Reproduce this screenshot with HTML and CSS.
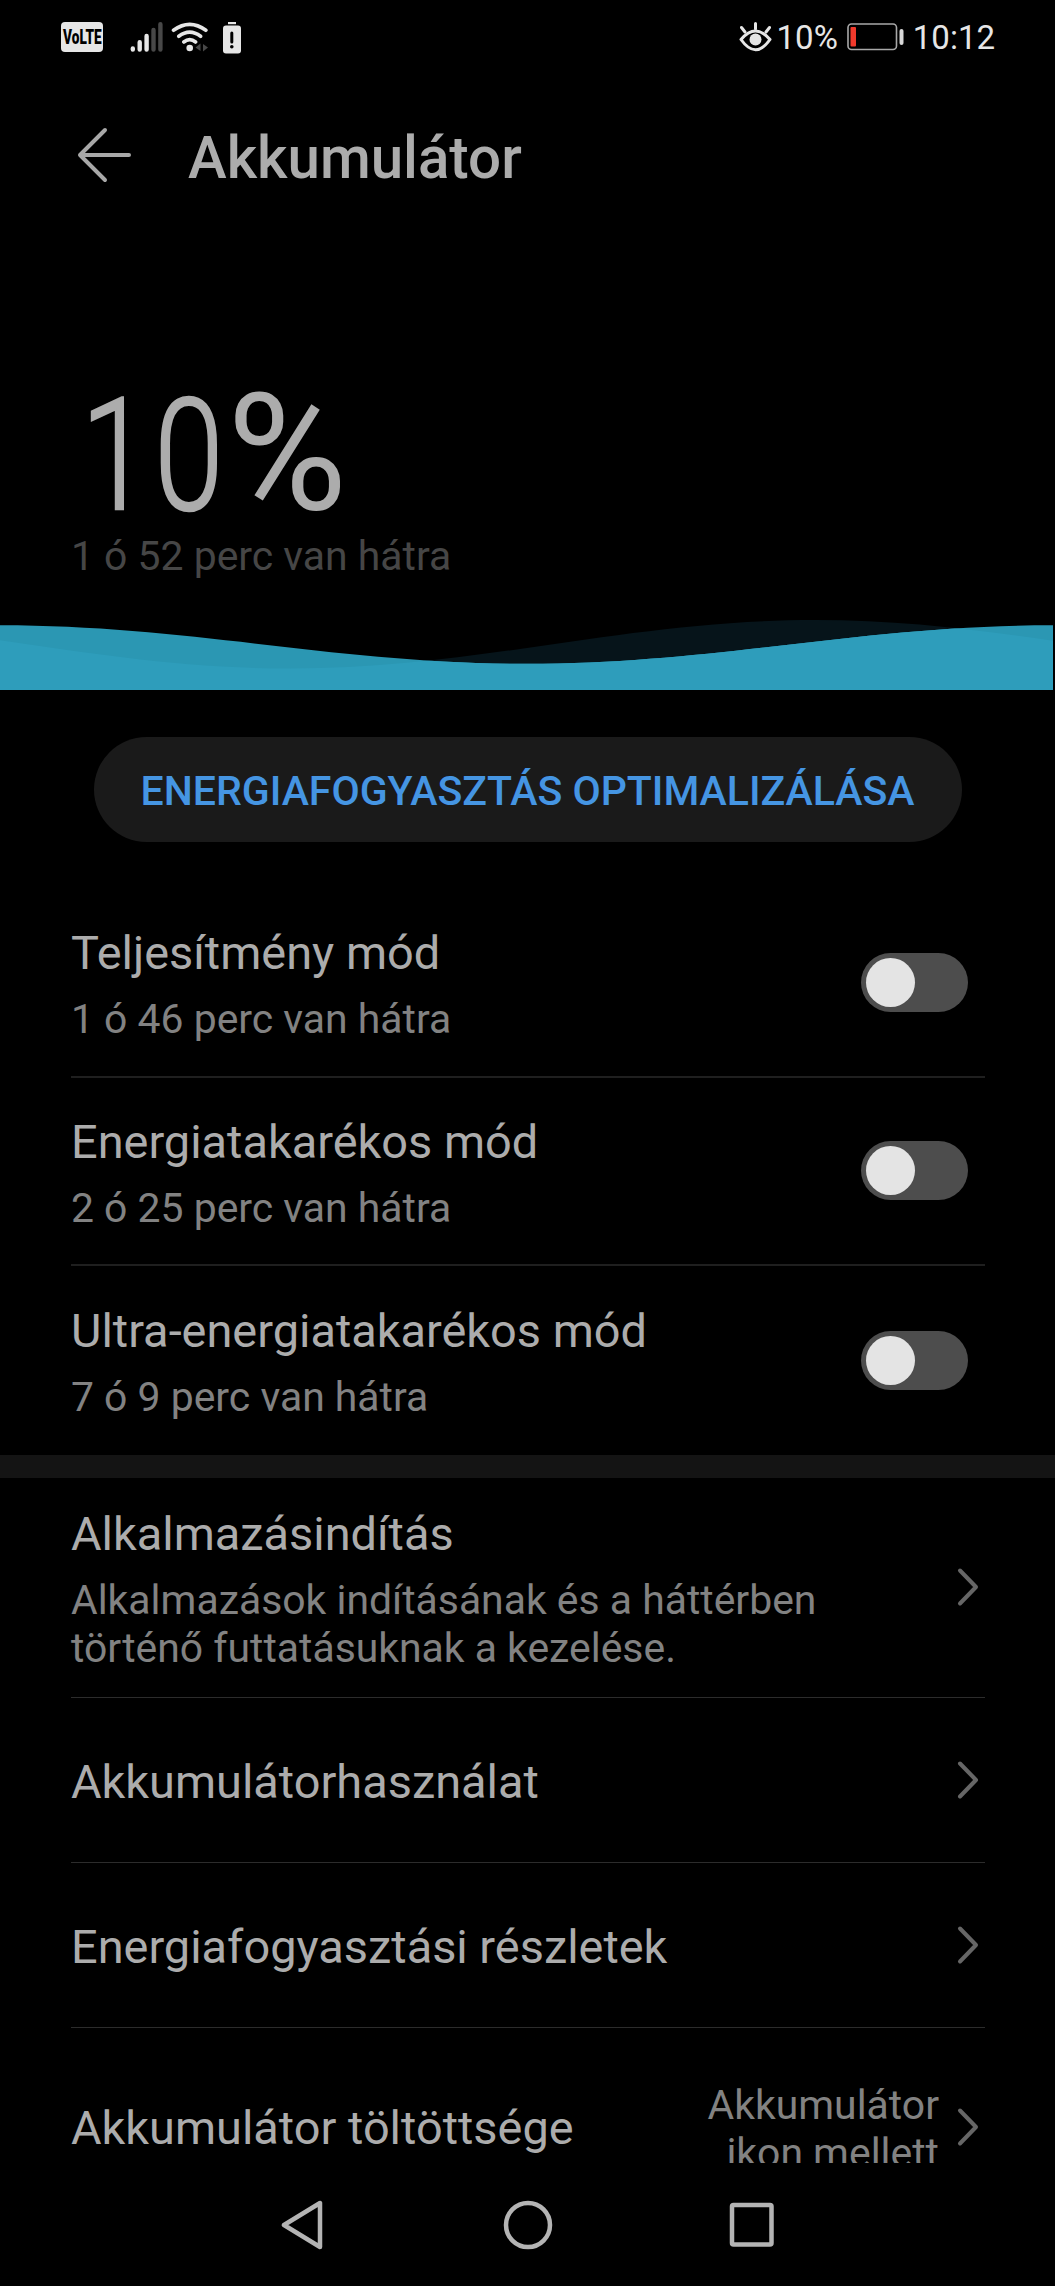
FILE: index.html
```html
<!DOCTYPE html>
<html lang="hu">
<head>
    <meta charset="UTF-8">
    <meta name="viewport" content="width=device-width, initial-scale=1.0">
    <title>Akkumulátor</title>
    <link rel="stylesheet" href="styles.css">
</head>
<body>
    <div class="status-bar">
        <div class="status-left">
            <span class="volte"><span>VoLTE</span></span>
            <svg class="signal" width="34" height="32" viewBox="0 0 34 32" fill="none" stroke-width="4.4" stroke-linecap="round">
                <path stroke="#e6e6e6" d="M2.8 27.5v1M9.7 21.2v7.3M16.6 15v13.5"/>
                <path stroke="#484848" d="M23.5 9v19.5M30.4 3.2v25.3"/>
            </svg>
            <svg class="wifi" width="38" height="32" viewBox="0 0 38 32" fill="none" stroke="#e6e6e6" stroke-width="3.6" stroke-linecap="round">
                <path d="M2.5 9.3q16.2-12 32.4 0M7.8 15.3q10.9-8.4 21.8 0M12.8 21q5.9-4.6 11.8 0"/>
                <circle cx="18.7" cy="27" r="3.3" fill="#e6e6e6" stroke="none"/>
                <path d="M29.5 22.5v7.5l-5-3.5zM32 23v7.5l5-4z" fill="#484848" stroke="none"/>
            </svg>
            <svg class="battery-alert" width="20" height="32" viewBox="0 0 20 32">
                <path d="M6 0h8v2.2H6z" fill="#e6e6e6"/>
                <rect x="1" y="3.5" width="18" height="28" rx="3" fill="#e6e6e6"/>
                <path d="M9.8 11v9" stroke="#000" stroke-width="3" stroke-linecap="round"/>
                <circle cx="9.8" cy="24.8" r="1.8"/>
            </svg>
        </div>
        <div class="status-right">
            <svg class="eye" width="33" height="30" viewBox="0 0 33 30" fill="none" stroke="#e6e6e6" stroke-width="3" stroke-linecap="round">
                <path d="M16.5 1.5v5.5M2.5 5.5l3.5 4.5M30.5 5.5l-3.5 4.5"/>
                <path d="M2 17.5Q16.5 0.5 31 17.5Q16.5 38 2 17.5z" stroke-linejoin="round"/>
                <circle cx="16.5" cy="17.5" r="6" fill="#e6e6e6" stroke="none"/>
            </svg>
            <span class="percent">10%</span>
            <svg class="battery" width="58" height="28" viewBox="0 0 58 28">
                <rect x="1" y="1" width="48.5" height="25.5" rx="3.5" fill="none" stroke="#a8a8a8" stroke-width="1.6"/>
                <rect x="3.5" y="4" width="5.5" height="19.5" rx="1" fill="#f13a2c"/>
                <rect x="52.5" y="6" width="4" height="16" rx="2" fill="#d8d8d8"/>
            </svg>
            <span class="clock">10:12</span>
        </div>
    </div>

    <header class="header">
        <svg width="56" height="56" viewBox="0 0 56 56" fill="none" stroke="#a8a8a8" stroke-width="4" stroke-linecap="round" stroke-linejoin="round">
            <path d="M53 28H4M29 3L4 28l25 25"/>
        </svg>
        <h1>Akkumulátor</h1>
    </header>

    <section class="level">
        <div class="level-value"><span class="digits">10</span><span class="sign">%</span></div>
        <p class="level-time">1 ó 52 perc van hátra</p>
    </section>

    <svg class="wave" width="1053" height="72" viewBox="0 618 1053 72">
        <clipPath id="front"><path d="M0 625.3C192 625.3 336 663.8 527 663.8S861 625.3 1053 625.3V690H0z"/></clipPath>
        <path fill="#06141a" d="M-235 620C-43.8 620 98.8 668.5 290 668.5S623.8 620 815 620S1148.8 668.5 1340 668.5V690H-235z"/>
        <path fill="#2b97b3" d="M0 625.3C192 625.3 336 663.8 527 663.8S861 625.3 1053 625.3V690H0z"/>
        <path clip-path="url(#front)" fill="#2e9dbb" d="M-235 620C-43.8 620 98.8 668.5 290 668.5S623.8 620 815 620S1148.8 668.5 1340 668.5V690H-235z"/>
    </svg>

    <button class="optimize" type="button">ENERGIAFOGYASZTÁS OPTIMALIZÁLÁSA</button>

    <section class="modes">
        <div class="row mode">
            <div class="text">
                <h2>Teljesítmény mód</h2>
                <p>1 ó 46 perc van hátra</p>
            </div>
            <span class="switch"></span>
        </div>
        <div class="row mode">
            <div class="text">
                <h2>Energiatakarékos mód</h2>
                <p>2 ó 25 perc van hátra</p>
            </div>
            <span class="switch"></span>
        </div>
        <div class="row mode">
            <div class="text">
                <h2>Ultra-energiatakarékos mód</h2>
                <p>7 ó 9 perc van hátra</p>
            </div>
            <span class="switch"></span>
        </div>
    </section>

    <section class="links">
        <div class="row launch">
            <div class="text">
                <h2>Alkalmazásindítás</h2>
                <p>Alkalmazások indításának és a háttérben<br>történő futtatásuknak a kezelése.</p>
            </div>
            <svg class="chevron" width="22" height="40" viewBox="0 0 22 40"><path d="M3 3.5l16 16.5L3 36.5"/></svg>
        </div>
        <div class="row link">
            <h2>Akkumulátorhasználat</h2>
            <svg class="chevron" width="22" height="40" viewBox="0 0 22 40"><path d="M3 3.5l16 16.5L3 36.5"/></svg>
        </div>
        <div class="row link">
            <h2>Energiafogyasztási részletek</h2>
            <svg class="chevron" width="22" height="40" viewBox="0 0 22 40"><path d="M3 3.5l16 16.5L3 36.5"/></svg>
        </div>
        <div class="row display">
            <h2>Akkumulátor töltöttsége</h2>
            <p class="value">Akkumulátor<br>ikon mellett</p>
            <svg class="chevron" width="22" height="40" viewBox="0 0 22 40"><path d="M3 3.5l16 16.5L3 36.5"/></svg>
        </div>
    </section>

    <nav class="nav-bar">
        <svg width="50" height="50" viewBox="0 0 50 50"><path d="M41 3v44L5 25z"/></svg>
        <svg width="50" height="50" viewBox="0 0 50 50"><circle cx="25" cy="25" r="22"/></svg>
        <svg width="50" height="50" viewBox="0 0 50 50"><rect x="5" y="5" width="39.5" height="39.5" rx="1.5"/></svg>
    </nav>
</body>
</html>
```
FILE: styles.css
```css
* {
    box-sizing: border-box;
}

body {
    display: flex;
    flex-direction: column;
    width: 1055px;
    height: 2286px;
    margin: 0;
    overflow: hidden;
    background: #000;
    color: #acacac;
    font-family: Roboto, sans-serif;
}

h1, h2, p {
    margin: 0;
}

svg {
    display: block;
    flex: none;
}

/* Status bar */
.status-bar {
    display: flex;
    justify-content: space-between;
    height: 80px;
    padding: 21px 60px 0 61px;
    color: #e6e6e6;
    font-size: 33px;
    line-height: 33px;
}

.status-left,
.status-right {
    display: flex;
    align-items: flex-start;
}

.volte {
    display: flex;
    justify-content: center;
    width: 42px;
    height: 30px;
    margin: 1px 27px 0 0;
    border-radius: 4px;
    background: #e6e6e6;
    color: #000;
    font-size: 20px;
    font-weight: 900;
    line-height: 30px;
}

.volte span {
    transform: scaleX(0.68);
}

.wifi {
    margin-left: 7px;
}

.battery-alert {
    margin: 1px 0 0 13px;
}

.eye {
    margin: 1px 5px 0 0;
}

.battery {
    margin: 2px 8px 0 9px;
}

/* Header */
.header {
    display: flex;
    align-items: center;
    height: 150px;
    padding: 0 76px;
}

.header h1 {
    margin: 6px 0 0 56px;
    font-size: 58.3px;
    font-weight: 500;
    line-height: 70px;
}

/* Battery level */
.level {
    height: 388px;
    padding: 141px 71px 0;
}

.level-value {
    display: flex;
    align-items: baseline;
    height: 161px;
    padding-left: 10px;
    font-size: 164px;
    line-height: 164px;
}

.digits {
    width: 146px;
    font-size: 155px;
    font-weight: 300;
    letter-spacing: 6px;
    -webkit-text-stroke: 2.5px #acacac;
    transform: scaleX(0.8);
    transform-origin: left;
}

.level-time {
    color: #464646;
    font-size: 40.9px;
    line-height: 48px;
}

.wave {
    margin-bottom: 47px;
}

.optimize {
    flex: none;
    align-self: center;
    width: 868px;
    height: 105px;
    padding: 2px 0 0;
    border: none;
    border-radius: 53px;
    background: #1a1a1a;
    color: #4595e3;
    font-family: inherit;
    font-size: 41px;
    font-weight: 500;
    white-space: nowrap;
}

/* Settings rows */
.modes {
    flex: none;
    margin-top: 47px;
    border-bottom: 23px solid #141414;
}

.row {
    display: flex;
    align-items: center;
    margin: 0 70px 0 71px;
    border-bottom: 1px solid #2c2c2c;
}

.row h2 {
    flex: 1;
    font-size: 46.9px;
    font-weight: 400;
    line-height: 56px;
}

.row p {
    color: #828282;
    font-size: 40.9px;
    line-height: 48px;
}

.text {
    flex: 1;
    padding-top: 4px;
}

.text p {
    margin-top: 14px;
}

.mode {
    height: 188.5px;
    border-bottom: 2px solid #1f1f1f;
}

.row:last-child {
    border-bottom: none;
}

.switch {
    width: 107px;
    height: 59px;
    margin-right: 17px;
    padding: 5px;
    border-radius: 30px;
    background: #4d4d4d;
}

.switch::before {
    content: "";
    display: block;
    width: 49px;
    height: 49px;
    border-radius: 50%;
    background: #e4e4e4;
}

/* The last row scrolls under the nav bar */
.links {
    flex: none;
    height: 685.5px;
    overflow: hidden;
}

.launch {
    height: 220.5px;
}

.link {
    height: 165px;
}

.display {
    height: 197px;
}

.link h2,
.display h2 {
    padding-top: 3px;
}

.row .value {
    margin-right: 18px;
    padding-top: 5px;
    text-align: right;
}

.chevron {
    margin-right: 6px;
    fill: none;
    stroke: #666;
    stroke-width: 4;
    stroke-linecap: round;
    stroke-linejoin: round;
}

.nav-bar {
    display: flex;
    flex: 1;
    justify-content: center;
    align-items: center;
    gap: 174px;
    fill: none;
    stroke: #b4b4b4;
    stroke-width: 4.5;
    stroke-linejoin: round;
}
```
